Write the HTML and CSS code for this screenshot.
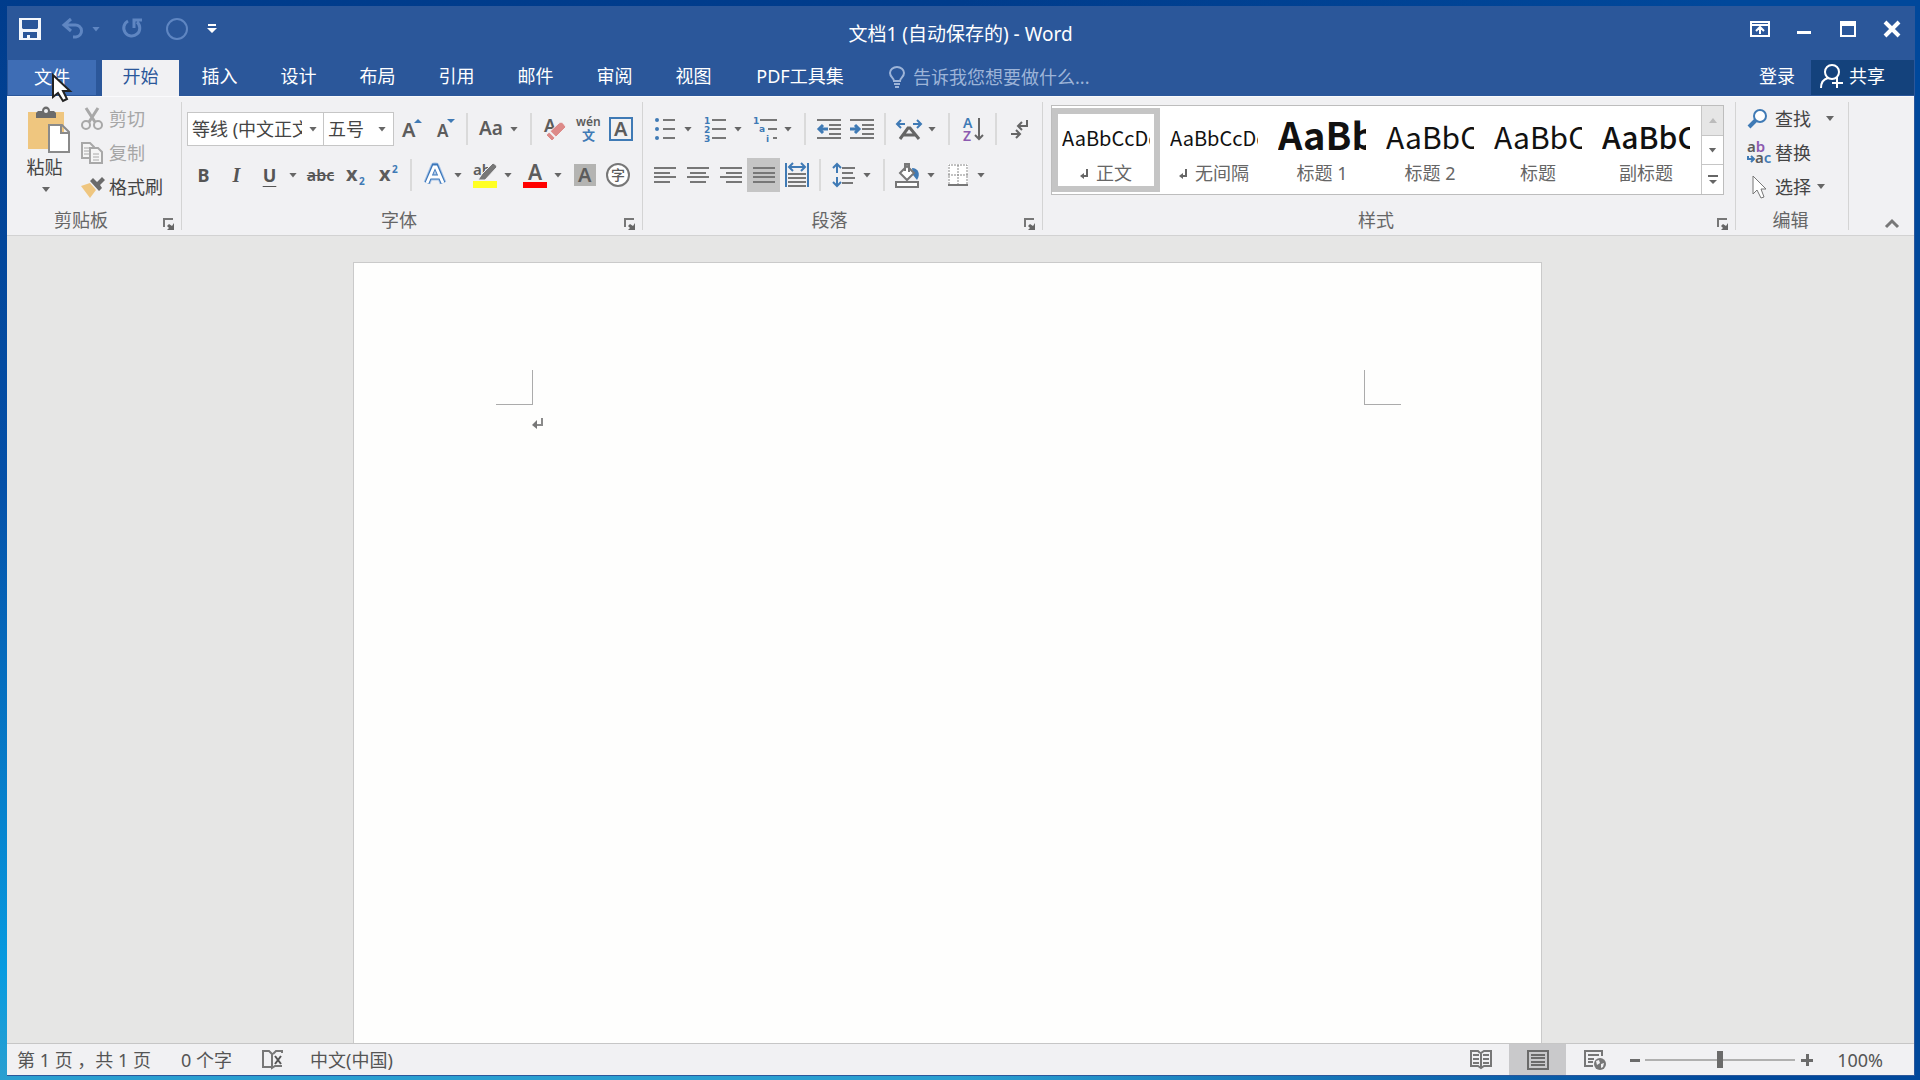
FILE: index.html
```
<!DOCTYPE html>
<html lang="zh-CN">
<head>
    <meta charset="UTF-8">
    <meta name="viewport" content="width=device-width, initial-scale=1.0">
    <title>文档1 (自动保存的) - Word</title>
    <link rel="stylesheet" href="styles.css">
</head>
<body>
    <div class="window">
        <header class="titlebar">
            <div class="quick">
                <button class="q save" aria-label="保存"><svg width="22" height="22"><path fill="#f4f7fc" fill-rule="evenodd" d="M0 0h22v22H0zM3 2v8l1 1h14l1-1V2zM4 14v6h4v-3h3v3h7v-6z"/></svg></button>
                <button class="q undo dim" aria-label="撤消"><svg width="22" height="22"><path fill="none" stroke="currentColor" stroke-width="3" d="M9 1L2 7l7 6M2 7h11a6 6 0 0 1 1 12h-3"/></svg></button>
                <button class="q dim" aria-label="撤消列表"><i class="arrow"></i></button>
                <button class="q redo dim" aria-label="重复"><svg width="22" height="22"><path fill="none" stroke="currentColor" stroke-width="3" d="M6 3a8 8 0 1 0 9 1M12 10V2h8"/></svg></button>
                <button class="q circle dim" aria-label="触摸"><svg width="22" height="22"><circle cx="11" cy="11" r="10" fill="none" stroke="currentColor" stroke-width="2"/></svg></button>
                <button class="q" aria-label="自定义快速访问工具栏"><svg width="10" height="10"><path fill="#fff" d="M1 0h8v2H1zM0 4h10L5 9z"/></svg></button>
            </div>
            <h1>文档1 (自动保存的) - Word</h1>
            <div class="controls">
                <button aria-label="功能区显示选项"><svg width="20" height="16"><path fill="none" stroke="#fff" stroke-width="2" d="M1 1h18v14H1zM1 4h18M10 13V7M6 10l4-4 4 4"/></svg></button>
                <button aria-label="最小化"><svg width="14" height="16"><path fill="#fff" d="M0 10h14v3H0z"/></svg></button>
                <button aria-label="最大化"><svg width="16" height="16"><path fill="#fff" fill-rule="evenodd" d="M0 0h16v16H0zM2 5v9h12V5z"/></svg></button>
                <button aria-label="关闭"><svg width="16" height="16"><path stroke="#fff" stroke-width="4" d="M1 1l14 14M15 1L1 15"/></svg></button>
            </div>
        </header>

        <nav class="tabs">
            <button class="tab file">文件</button>
            <button class="tab active">开始</button>
            <button class="tab">插入</button>
            <button class="tab">设计</button>
            <button class="tab">布局</button>
            <button class="tab">引用</button>
            <button class="tab">邮件</button>
            <button class="tab">审阅</button>
            <button class="tab">视图</button>
            <button class="tab wide">PDF工具集</button>
            <label class="tell">
                <svg width="16" height="22"><path fill="none" stroke="currentColor" stroke-width="2" d="M5 15c0-3-4-4-4-8a7 6 0 0 1 14 0c0 4-4 5-4 8zM5 18h6M6 21h4"/></svg>
                <input type="text" placeholder="告诉我您想要做什么..." aria-label="告诉我您想要做什么">
            </label>
            <a class="login" href="#">登录</a>
            <button class="share"><svg width="24" height="26"><path fill="none" stroke="#fff" stroke-width="2" d="M1 25c0-6 3-9 7-10M12 2c4 0 7 3 7 7s-3 7-7 7-7-3-7-7 3-7 7-7M17 14v11M12 20h11"/></svg>共享</button>
        </nav>

        <section class="ribbon">
            <div class="group clipboard">
                <div class="content">
                    <button class="paste">
                        <svg width="44" height="46"><path fill="#efc67f" d="M1 5h36v37H1z"/><path fill="#6b6b6b" d="M9 11V6l2-2h4c0-6 8-6 8 0h4l2 2v5z"/><circle cx="19" cy="4" r="2" fill="#f1f1f3"/><path fill="#fff" stroke="#8a8a8a" stroke-width="2" d="M22 18h13l7 7v20H22zM34 18v8h8"/></svg>
                        <span>粘贴</span>
                        <i class="arrow"></i>
                    </button>
                    <div class="stack">
                        <button class="row off"><svg width="22" height="22"><g fill="none" stroke="#a8a8a8" stroke-width="2"><circle cx="5" cy="17" r="4"/><circle cx="17" cy="17" r="4"/><path stroke-width="3" d="M5 0l9 14M17 0L8 14"/></g></svg>剪切</button>
                        <button class="row off"><svg width="22" height="22"><path fill="#f5f5f5" stroke="#a8a8a8" stroke-width="2" d="M1 1h8l4 4v11H1z"/><path stroke="#a8a8a8" stroke-width="1" d="M3 6h5M3 9h5M3 12h5"/><path fill="#f5f5f5" stroke="#a8a8a8" stroke-width="2" d="M9 6h8l4 4v11H9z"/><path stroke="#a8a8a8" d="M12 12h6M12 15h6M12 18h6"/></svg>复制</button>
                        <button class="row"><svg width="24" height="22"><path fill="#efc67f" d="M0 10l9-3 6 7-6 8z"/><path fill="#6b6b6b" d="M9 5l3-3 4 4 5-5 3 3-5 5 2 3-3 3z"/></svg>格式刷</button>
                    </div>
                </div>
                <footer>剪贴板<button class="launch" aria-label="剪贴板选项"><svg width="12" height="12"><path fill="none" stroke="#777" stroke-width="2" d="M1 9V1h9"/><path fill="#666" d="M11 5v7H4l2-2-2-2 2-2 3 2z"/></svg></button></footer>
            </div>

            <div class="group font">
                <div class="content lines">
                    <div class="line">
                        <span class="combo name"><select aria-label="字体"><option>等线 (中文正文)</option></select><i class="arrow"></i></span>
                        <span class="combo size"><select aria-label="字号"><option>五号</option></select><i class="arrow"></i></span>
                        <button class="tool" aria-label="增大字号"><svg width="24" height="24"><text x="3" y="20" class="ic" font-size="20">A</text><path fill="#3f7ab5" d="M15 6l4-4 4 4z"/></svg></button>
                        <button class="tool" aria-label="减小字号"><svg width="24" height="24"><text x="5" y="20" class="ic" font-size="17">A</text><path fill="#3f7ab5" d="M15 2h8l-4 4z"/></svg></button>
                        <i class="sep"></i>
                        <button class="tool" aria-label="更改大小写"><svg width="24" height="24"><text x="0" y="18" class="ic" font-size="19">Aa</text></svg></button>
                        <button class="caret" aria-label="更改大小写选项"><i class="arrow"></i></button>
                        <i class="sep"></i>
                        <button class="tool" aria-label="清除格式"><svg width="24" height="24"><text x="1" y="15" class="ic" font-size="18">A</text><path fill="#dd8a88" stroke="#f1f1f3" d="M3 18l13-12q2-2 4 0l3 4-14 14z"/><path stroke="#f1f1f3" stroke-width="2" d="M6 14l7 7"/></svg></button>
                        <button class="tool" aria-label="拼音指南"><svg width="26" height="24"><text x="1" y="9" class="ic" font-size="12">wén</text><text x="7" y="23" class="ic blue cjk" font-size="13">文</text></svg></button>
                        <button class="tool" aria-label="字符边框"><svg width="24" height="24"><path fill="none" stroke="#3f7ab5" stroke-width="2" d="M1 1h22v22H1z"/><text x="5" y="19" class="ic" font-size="20">A</text></svg></button>
                    </div>
                    <div class="line">
                        <button class="tool bold">B</button>
                        <button class="tool italic">I</button>
                        <button class="tool under">U</button>
                        <button class="caret" aria-label="下划线选项"><i class="arrow"></i></button>
                        <button class="tool strike">abc</button>
                        <button class="tool" aria-label="下标"><svg width="24" height="24"><text x="3" y="18" class="ic heavy" font-size="20">x</text><text x="16" y="22" class="ic heavy blue" font-size="10">2</text></svg></button>
                        <button class="tool" aria-label="上标"><svg width="24" height="24"><text x="3" y="18" class="ic heavy" font-size="20">x</text><text x="16" y="10" class="ic heavy blue" font-size="10">2</text></svg></button>
                        <i class="sep"></i>
                        <button class="tool" aria-label="文本效果"><svg width="24" height="24"><path fill="none" stroke="#a9c4e6" stroke-width="7" stroke-linejoin="round" d="M4 20L11 3h2l7 17M7 14h10"/><path fill="none" stroke="#3a76ba" stroke-width="5" d="M4 20L11 3h2l7 17M7 14h10"/><path fill="none" stroke="#fff" stroke-width="3" d="M4 20L11 4h2l7 16M7 14h10"/></svg></button>
                        <button class="caret" aria-label="文本效果选项"><i class="arrow"></i></button>
                        <button class="tool" aria-label="突出显示"><svg width="26" height="26"><text x="1" y="13" class="ic" font-size="15">ab</text><path fill="#777" stroke="#f1f1f3" d="M24 3l-3-2L10 12l-4 6h7L25 5z"/><path fill="#ff2" d="M1 19h24v7H1z"/></svg></button>
                        <button class="caret" aria-label="突出显示颜色"><i class="arrow"></i></button>
                        <button class="tool" aria-label="字体颜色"><svg width="26" height="26"><text x="6" y="18" class="ic" font-size="21">A</text><path fill="#f00" d="M1 20h24v6H1z"/></svg></button>
                        <button class="caret" aria-label="字体颜色选项"><i class="arrow"></i></button>
                        <button class="tool" aria-label="字符底纹"><svg width="22" height="22"><path fill="#b4b4b2" d="M0 0h22v22H0z"/><text x="4" y="18" class="ic" font-size="20">A</text></svg></button>
                        <button class="tool" aria-label="带圈字符"><svg width="26" height="26"><circle cx="13" cy="13" r="11" fill="#fff" stroke="#777" stroke-width="2"/><text x="6" y="18" class="ic cjk thin" font-size="14">字</text></svg></button>
                    </div>
                </div>
                <footer>字体<button class="launch" aria-label="字体选项"><svg width="12" height="12"><path fill="none" stroke="#777" stroke-width="2" d="M1 9V1h9"/><path fill="#666" d="M11 5v7H4l2-2-2-2 2-2 3 2z"/></svg></button></footer>
            </div>

            <div class="group paragraph">
                <div class="content lines">
                    <div class="line">
                        <button class="tool" aria-label="项目符号"><svg width="20" height="24"><g fill="#3f7ab5"><circle cx="2" cy="3" r="2"/><circle cx="2" cy="12" r="2"/><circle cx="2" cy="21" r="2"/></g><path stroke="#777" stroke-width="2" d="M8 3h12M8 12h12M8 21h12"/></svg></button>
                        <button class="caret" aria-label="项目符号选项"><i class="arrow"></i></button>
                        <button class="tool" aria-label="编号"><svg width="22" height="24"><g class="nums"><text x="0" y="7">1</text><text x="0" y="16">2</text><text x="0" y="25">3</text></g><path stroke="#777" stroke-width="2" d="M8 3h14M8 12h14M8 21h14"/></svg></button>
                        <button class="caret" aria-label="编号选项"><i class="arrow"></i></button>
                        <button class="tool" aria-label="多级列表"><svg width="24" height="24"><g class="nums"><text x="0" y="7">1</text><text x="6" y="15">a</text><text x="13" y="25">i</text></g><path stroke="#777" stroke-width="2" d="M7 3h17M15 12h9M20 21h4"/></svg></button>
                        <button class="caret" aria-label="多级列表选项"><i class="arrow"></i></button>
                        <i class="sep"></i>
                        <button class="tool" aria-label="减少缩进量"><svg width="24" height="24"><path stroke="#777" stroke-width="2" d="M0 3h24M12 8h12M12 12h12M12 17h12M0 21h24"/><path fill="none" stroke="#3f7ab5" stroke-width="3" d="M11 12H3M6 8l-4 4 4 4"/></svg></button>
                        <button class="tool" aria-label="增加缩进量"><svg width="24" height="24"><path stroke="#777" stroke-width="2" d="M0 3h24M12 8h12M12 12h12M12 17h12M0 21h24"/><path fill="none" stroke="#3f7ab5" stroke-width="3" d="M0 12h8M5 8l4 4-4 4"/></svg></button>
                        <i class="sep"></i>
                        <button class="tool" aria-label="中文版式"><svg width="26" height="24"><path fill="none" stroke="#666" stroke-width="3" d="M4 22L12 11h2l9 11M7 18h12"/><path fill="none" stroke="#3f7ab5" stroke-width="2" d="M9 7H2M5 3L1 7l4 4M17 7h7M21 3l4 4-4 4"/></svg></button>
                        <button class="caret" aria-label="中文版式选项"><i class="arrow"></i></button>
                        <i class="sep"></i>
                        <button class="tool" aria-label="排序"><svg width="22" height="24"><text x="1" y="11" class="ic blue" font-size="14">A</text><text x="1" y="24" class="ic purple" font-size="14">Z</text><path fill="none" stroke="#666" stroke-width="2" d="M17 1v20M13 18l4 4 4-4"/></svg></button>
                        <i class="sep"></i>
                        <button class="tool" aria-label="显示编辑标记"><svg width="18" height="20"><path fill="none" stroke="#666" stroke-width="2" d="M16 1v6H8M11 3L7 7l4 4M0 15h8M5 11l4 4-4 4"/></svg></button>
                    </div>
                    <div class="line">
                        <button class="tool" aria-label="左对齐"><svg width="22" height="18"><path stroke="#777" stroke-width="2" d="M0 2h22M0 7h16M0 11h22M0 16h16"/></svg></button>
                        <button class="tool" aria-label="居中"><svg width="22" height="18"><path stroke="#777" stroke-width="2" d="M0 2h22M3 7h16M0 11h22M3 16h16"/></svg></button>
                        <button class="tool" aria-label="右对齐"><svg width="22" height="18"><path stroke="#777" stroke-width="2" d="M0 2h22M6 7h16M0 11h22M6 16h16"/></svg></button>
                        <button class="tool on" aria-label="两端对齐"><svg width="22" height="18"><path stroke="#777" stroke-width="2" d="M0 2h22M0 7h22M0 11h22M0 16h22"/></svg></button>
                        <button class="tool" aria-label="分散对齐"><svg width="24" height="24"><path stroke="#777" stroke-width="2" d="M3 11h18M3 15h18M3 19h18M3 23h18"/><path fill="none" stroke="#3f7ab5" stroke-width="2" d="M1 0v24M23 0v24M4 4h16M8 0L4 4l4 4M16 0l4 4-4 4"/></svg></button>
                        <i class="sep"></i>
                        <button class="tool" aria-label="行距"><svg width="22" height="24"><path stroke="#777" stroke-width="2" d="M9 5h13M9 10h11M9 15h13M9 20h11"/><path fill="none" stroke="#3f7ab5" stroke-width="2" d="M4 10V2M0 5l4-4 4 4M4 14v8M0 19l4 4 4-4"/></svg></button>
                        <button class="caret" aria-label="行距选项"><i class="arrow"></i></button>
                        <i class="sep"></i>
                        <button class="tool" aria-label="底纹"><svg width="26" height="26"><path fill="#3f7ab5" d="M17 6c6 0 9 6 5 12l-4-5z"/><path fill="#fff" stroke="#777" stroke-width="2" d="M12 4l7 7-7 7-7-7zM1 20h22v5H1z"/><path fill="none" stroke="#777" stroke-width="2" d="M10 9V2h4v8"/></svg></button>
                        <button class="caret" aria-label="底纹选项"><i class="arrow"></i></button>
                        <button class="tool" aria-label="边框"><svg width="20" height="22"><path fill="#fff" d="M0 0h20v20H0z"/><path fill="none" stroke="#888" stroke-width="1" stroke-dasharray="2 1" d="M1 20V1h18v19M10 1v19M0 11h20"/><path stroke="#777" stroke-width="2" d="M0 21h20"/></svg></button>
                        <button class="caret" aria-label="边框选项"><i class="arrow"></i></button>
                    </div>
                </div>
                <footer>段落<button class="launch" aria-label="段落选项"><svg width="12" height="12"><path fill="none" stroke="#777" stroke-width="2" d="M1 9V1h9"/><path fill="#666" d="M11 5v7H4l2-2-2-2 2-2 3 2z"/></svg></button></footer>
            </div>

            <div class="group styles">
                <div class="content">
                    <div class="gallery">
                        <div class="items">
                            <button class="style selected"><span class="sample">AaBbCcDd</span><span class="caption"><svg width="8" height="12"><path fill="none" stroke="#666" stroke-width="2" d="M7 2v7H3"/><path fill="#666" d="M4 6v6L0 9z"/></svg>正文</span></button>
                            <button class="style"><span class="sample">AaBbCcDd</span><span class="caption"><svg width="8" height="12"><path fill="none" stroke="#666" stroke-width="2" d="M7 2v7H3"/><path fill="#666" d="M4 6v6L0 9z"/></svg>无间隔</span></button>
                            <button class="style"><span class="sample huge">AaBbC</span><span class="caption">标题 1</span></button>
                            <button class="style"><span class="sample big">AaBbC</span><span class="caption">标题 2</span></button>
                            <button class="style"><span class="sample big">AaBbC</span><span class="caption">标题</span></button>
                            <button class="style"><span class="sample big strong">AaBbC</span><span class="caption">副标题</span></button>
                        </div>
                        <div class="scroller">
                            <button class="end" aria-label="上一行"><i class="arrow up"></i></button>
                            <button aria-label="下一行"><i class="arrow"></i></button>
                            <button aria-label="其他样式"><svg width="10" height="10"><path fill="#666" d="M0 0h10v2H0zM1 5h8L5 9z"/></svg></button>
                        </div>
                    </div>
                </div>
                <footer>样式<button class="launch" aria-label="样式选项"><svg width="12" height="12"><path fill="none" stroke="#777" stroke-width="2" d="M1 9V1h9"/><path fill="#666" d="M11 5v7H4l2-2-2-2 2-2 3 2z"/></svg></button></footer>
            </div>

            <div class="group editing">
                <div class="content">
                    <div class="stack">
                        <button class="row find"><svg width="22" height="20"><circle cx="13" cy="7" r="6" fill="#fff" stroke="#3f7ab5" stroke-width="2"/><path stroke="#3f7ab5" stroke-width="4" d="M9 11l-7 7"/></svg>查找<i class="arrow"></i></button>
                        <button class="row"><svg width="24" height="24"><text x="0" y="11" class="ic" font-size="15">a<tspan class="purple">b</tspan></text><text x="8" y="22" class="ic" font-size="15">a<tspan class="blue">c</tspan></text><path fill="none" stroke="#3f7ab5" stroke-width="2" d="M1 15v3h5M4 15l3 3-3 3"/></svg>替换</button>
                        <button class="row"><svg width="22" height="24"><path fill="#fff" stroke="#777" stroke-width="1" d="M6 1v18l4-4 4 8 3-1-3-8h5z"/></svg>选择<i class="arrow"></i></button>
                    </div>
                </div>
                <footer>编辑</footer>
            </div>
            <button class="collapse" aria-label="折叠功能区"><svg width="14" height="10"><path fill="none" stroke="#777" stroke-width="3" d="M1 8l6-6 6 6"/></svg></button>
        </section>

        <main class="workspace">
            <article class="page" contenteditable="true" spellcheck="false" aria-label="文档">
                <div class="margins"></div>
                <p><svg width="12" height="12"><path fill="none" stroke="#8a8a8a" stroke-width="2" d="M10 1v7H5"/><path fill="#777" d="M5 3v9L0 8z"/></svg></p>
            </article>
        </main>

        <footer class="status">
            <span>第 1 页 ，共 1 页</span>
            <span>0 个字</span>
            <button class="proof" aria-label="校对"><svg width="22" height="20"><path fill="none" stroke="#777" stroke-width="2" d="M9 17H1V1h6l3 3v14l3-2h7M11 4l3-3h6v2"/><path stroke="#555" stroke-width="2" d="M13 6l6 8M19 6l-6 8"/></svg></button>
            <span>中文(中国)</span>
            <div class="views">
                <button aria-label="阅读视图"><svg width="22" height="20"><path fill="none" stroke="#777" stroke-width="2" d="M10 3L8 1H1v15h7l3 2 3-2h7V1h-7l-3 2v16"/><path stroke="#777" stroke-width="2" d="M3 5h6M3 9h6M3 13h6M13 5h6M13 9h6M13 13h6"/></svg></button>
                <button class="on" aria-label="页面视图"><svg width="22" height="20"><path fill="none" stroke="#6b6b6b" stroke-width="2" d="M1 1h20v18H1zM4 5h14M4 8h14M4 12h14M4 15h14"/></svg></button>
                <button aria-label="Web 版式视图"><svg width="22" height="20"><path fill="none" stroke="#777" stroke-width="2" d="M9 16H1V1h17v5M4 5h11M4 9h6M4 12h5"/><circle cx="16" cy="14" r="6" fill="#777"/><path fill="#f1f1f3" d="M12 11l3-1 1 3-3 2zM17 14l3-1-1 4-2 1z"/></svg></button>
            </div>
            <button class="zoom" aria-label="缩小"><svg width="12" height="12"><path fill="#6b6b6b" d="M1 5h10v3H1z"/></svg></button>
            <input class="slider" type="range" min="0" max="100" value="50" aria-label="显示比例">
            <button class="zoom" aria-label="放大"><svg width="12" height="12"><path fill="#6b6b6b" d="M0 5h5V0h3v5h4v3H8v4H5V8H0z"/></svg></button>
            <button class="percent">100%</button>
        </footer>
    </div>
    <svg class="pointer" width="20" height="30"><path fill="#fff" stroke="#222" stroke-width="2" d="M1 2v22l5-4 5 8 4-2-4-8h7z"/></svg>
</body>
</html>
```
FILE: styles.css
```
* { box-sizing: border-box; }
body {
    margin: 0;
    height: 100vh;
    padding: 6px 5px 4px 7px;
    background: linear-gradient(90deg, transparent 50%, #00489b 90%), linear-gradient(#003c8c, #0450a8 45%, #079be0 90%, #2a9fd0);
    font: 18px/24px "Noto Sans", "Noto Sans CJK SC", sans-serif;
    color: #444;
}
button, input, select { font: inherit; color: inherit; }
button { display: flex; align-items: center; justify-content: center; padding: 0; border: 0; background: none; white-space: nowrap; }
svg { display: block; flex: none; overflow: visible; }
.window { display: flex; flex-direction: column; height: 100%; background: #2b579a; border-right: 1px solid #2b579a; border-bottom: 1px solid #2b579a; }

/* title bar */
.titlebar { display: grid; grid-template-columns: 1fr auto 1fr; height: 54px; }
.titlebar h1 { margin: 0; padding-top: 16px; font-size: 19px; line-height: 24px; font-weight: 400; color: #fff; }
.quick { display: flex; align-items: center; height: 46px; padding-left: 12px; }
.q { height: 30px; }
.save { margin-right: 21px; }
.undo { margin-right: 8px; }
.redo { margin: 0 22px 0 22px; }
.circle { margin-right: 19px; }
.dim { color: #5f86c2; }
.dim .arrow { color: #5f86c2; }
.controls { display: flex; justify-content: flex-end; height: 46px; }
.controls button { width: 44px; }

.arrow { display: block; width: 8px; height: 5px; background: currentColor; clip-path: polygon(0 0, 100% 0, 50% 100%); color: #666; flex: none; }
.arrow.up { transform: rotate(180deg); color: #bbb; }

/* tabs */
.tabs { display: flex; align-items: stretch; gap: 2px; height: 36px; padding-left: 1px; color: #fff; }
.tab { width: 77px; padding-bottom: 4px; }
.tab.file { width: 88px; height: 35px; margin-right: 4px; background: #3e6db5; padding-bottom: 2px; }
.tab.active { background: #f1f1f3; color: #2b579a; }
.tab.wide { width: 132px; }
.tell { display: flex; align-items: center; gap: 8px; flex: 1; padding: 0 0 2px 21px; color: #9db4d8; }
.tell input { width: 240px; padding: 0; border: 0; background: none; outline: 0; }
.tell input::placeholder { color: #9db4d8; opacity: 1; }
.login { padding: 4px 14px 0 0; color: #fff; text-decoration: none; }
.share { width: 103px; height: 35px; padding: 0 20px 4px 0; gap: 5px; background: #14427c; }

/* ribbon */
.ribbon { display: flex; height: 140px; background: #f1f1f3; border-bottom: 1px solid #d2d2d2; border-top: 1px solid #fafafc; }
.group { position: relative; display: flex; flex-direction: column; margin: 5px 0; border-right: 1px solid #d4d4d4; flex: none; }
.group .content { display: flex; height: 102px; }
.group footer { height: 26px; padding: 6px 26px 0 0; text-align: center; color: #666; line-height: 20px; }
.launch { position: absolute; right: 6px; bottom: 0; width: 12px; height: 12px; }
.clipboard { width: 175px; }
.paste { flex-direction: column; justify-content: flex-start; width: 62px; padding-top: 5px; margin-left: 8px; }
.paste svg { margin-left: 6px; }
.paste span { margin: 2px 3px 8px 0; }
.stack { display: flex; flex-direction: column; }
.clipboard .stack { padding-left: 4px; }
.row { justify-content: flex-start; gap: 4px; height: 34px; padding-bottom: 1px; }
.row svg { width: 24px; }
.off { color: #a6a6a6; }

.font { width: 461px; }
.paragraph { width: 400px; }
.lines { flex-direction: column; gap: 12px; padding: 10px 0 0 5px; }
.lines .line { display: flex; align-items: center; height: 34px; }
.combo { display: flex; align-items: center; position: relative; height: 34px; border: 1px solid #c6c6c6; background: #fff; }
.combo select { width: 100%; height: 100%; padding: 0 21px 0 4px; border: 0; background: none; appearance: none; outline: 0; }
.combo .arrow { position: absolute; right: 6px; pointer-events: none; }
.combo.name { width: 137px; }
.combo.size { width: 71px; margin-left: -1px; }
.combo.size .arrow { right: 7px; }
.tool { width: 33px; height: 34px; flex: none; }
.tool.on { background: #c5c5c5; }
.caret { justify-content: flex-start; width: 17px; height: 34px; padding-left: 3px; flex: none; }
.sep { width: 2px; height: 32px; margin: 0 6px; background: #dadada; flex: none; }
.bold, .under { font-weight: 700; color: #555; }
.italic { font: italic bold 20px "Liberation Serif", serif; color: #555; }
.under { text-decoration: underline; text-underline-offset: 4px; }
.strike { width: 35px; font-size: 16px; font-weight: 600; text-decoration: line-through; color: #555; }
.ic { font-family: "Noto Sans", sans-serif; font-weight: 600; fill: #5c5c5c; }
.ic.cjk { font-family: "Noto Sans CJK SC", sans-serif; }
.ic.thin { font-weight: 500; }
.ic.heavy { font-weight: 700; }
.ic.blue, .blue { fill: #3f7ab5; }
.ic.purple, .purple { fill: #8c5ab0; }
.nums { font: bold 9px "DejaVu Sans", sans-serif; fill: #3f7ab5; }

/* style gallery */
.styles { flex: 1; max-width: 693px; }
.gallery { display: flex; flex: 1; height: 90px; margin: 3px 11px 0 8px; border: 1px solid #bdbdbd; background: #fff; }
.items { display: flex; flex: 1; padding-top: 2px; overflow: hidden; }
.style { flex-direction: column; width: 108px; height: 84px; padding: 0 4px; border: 6px solid transparent; flex: none; }
.style.selected { border-color: #c5c5c5; }
.sample { width: 88px; height: 45px; overflow: hidden; font: 20px/44px "Noto Sans CJK SC", sans-serif; color: #111; text-align: left; }
.sample.big { font-size: 30px; line-height: 40px; }
.sample.huge { font-size: 38px; line-height: 36px; font-weight: 700; }
.sample.strong { font-weight: 500; }
.caption { display: flex; align-items: center; gap: 8px; height: 24px; color: #666; }
.scroller { display: flex; flex-direction: column; width: 22px; border-left: 1px solid #c6c6c6; }
.scroller button { flex: 1; }
.scroller button + button { border-top: 1px solid #c6c6c6; }
.scroller .end { background: #e6e6e6; }

.editing { width: 113px; }
.editing .stack { padding-left: 11px; }
.editing .arrow { margin-left: 2px; }
.editing .find .arrow { margin-left: 11px; }
.group.editing footer { padding-right: 3px; }
.collapse { align-self: flex-end; margin: 0 15px 6px auto; }

/* document */
.workspace { flex: 1; min-height: 0; overflow: hidden; padding: 26px 26px 0 0; background: #e6e6e5; }
.page { max-width: 1189px; height: 100%; margin: 0 auto; padding: 107px 140px 0 142px; border: 1px solid #cacaca; border-bottom: 0; background: #fefefd; outline: 0; }
.margins { display: flex; justify-content: space-between; height: 35px; }
.margins::before, .margins::after { content: ""; width: 36px; border: solid #ababab; border-width: 0 1px 1px 0; }
.margins::after { border-width: 0 0 1px 1px; }
.page p { margin: 12px 0 0 36px; }

/* status bar */
.status { display: flex; align-items: center; height: 32px; border-top: 1px solid #c6c6c6; padding-left: 10px; background: #f1f1f3; color: #555; }
.status > span { margin-right: 30px; }
.proof { margin-right: 26px; }
.views { display: flex; align-self: stretch; margin: 0 6px 0 auto; }
.views button { width: 57px; }
.views .on { background: #c9c9cb; }
.zoom { width: 12px; height: 24px; }
.slider { appearance: none; width: 150px; height: 17px; margin: 0 6px 0 4px; background: linear-gradient(#b0b0b0, #b0b0b0) center / 100% 2px no-repeat; }
.slider::-webkit-slider-thumb { appearance: none; width: 6px; height: 17px; background: #6b6b6b; }
.percent { margin: 0 31px 0 24px; }

.pointer { position: absolute; left: 52px; top: 73px; pointer-events: none; }
```
